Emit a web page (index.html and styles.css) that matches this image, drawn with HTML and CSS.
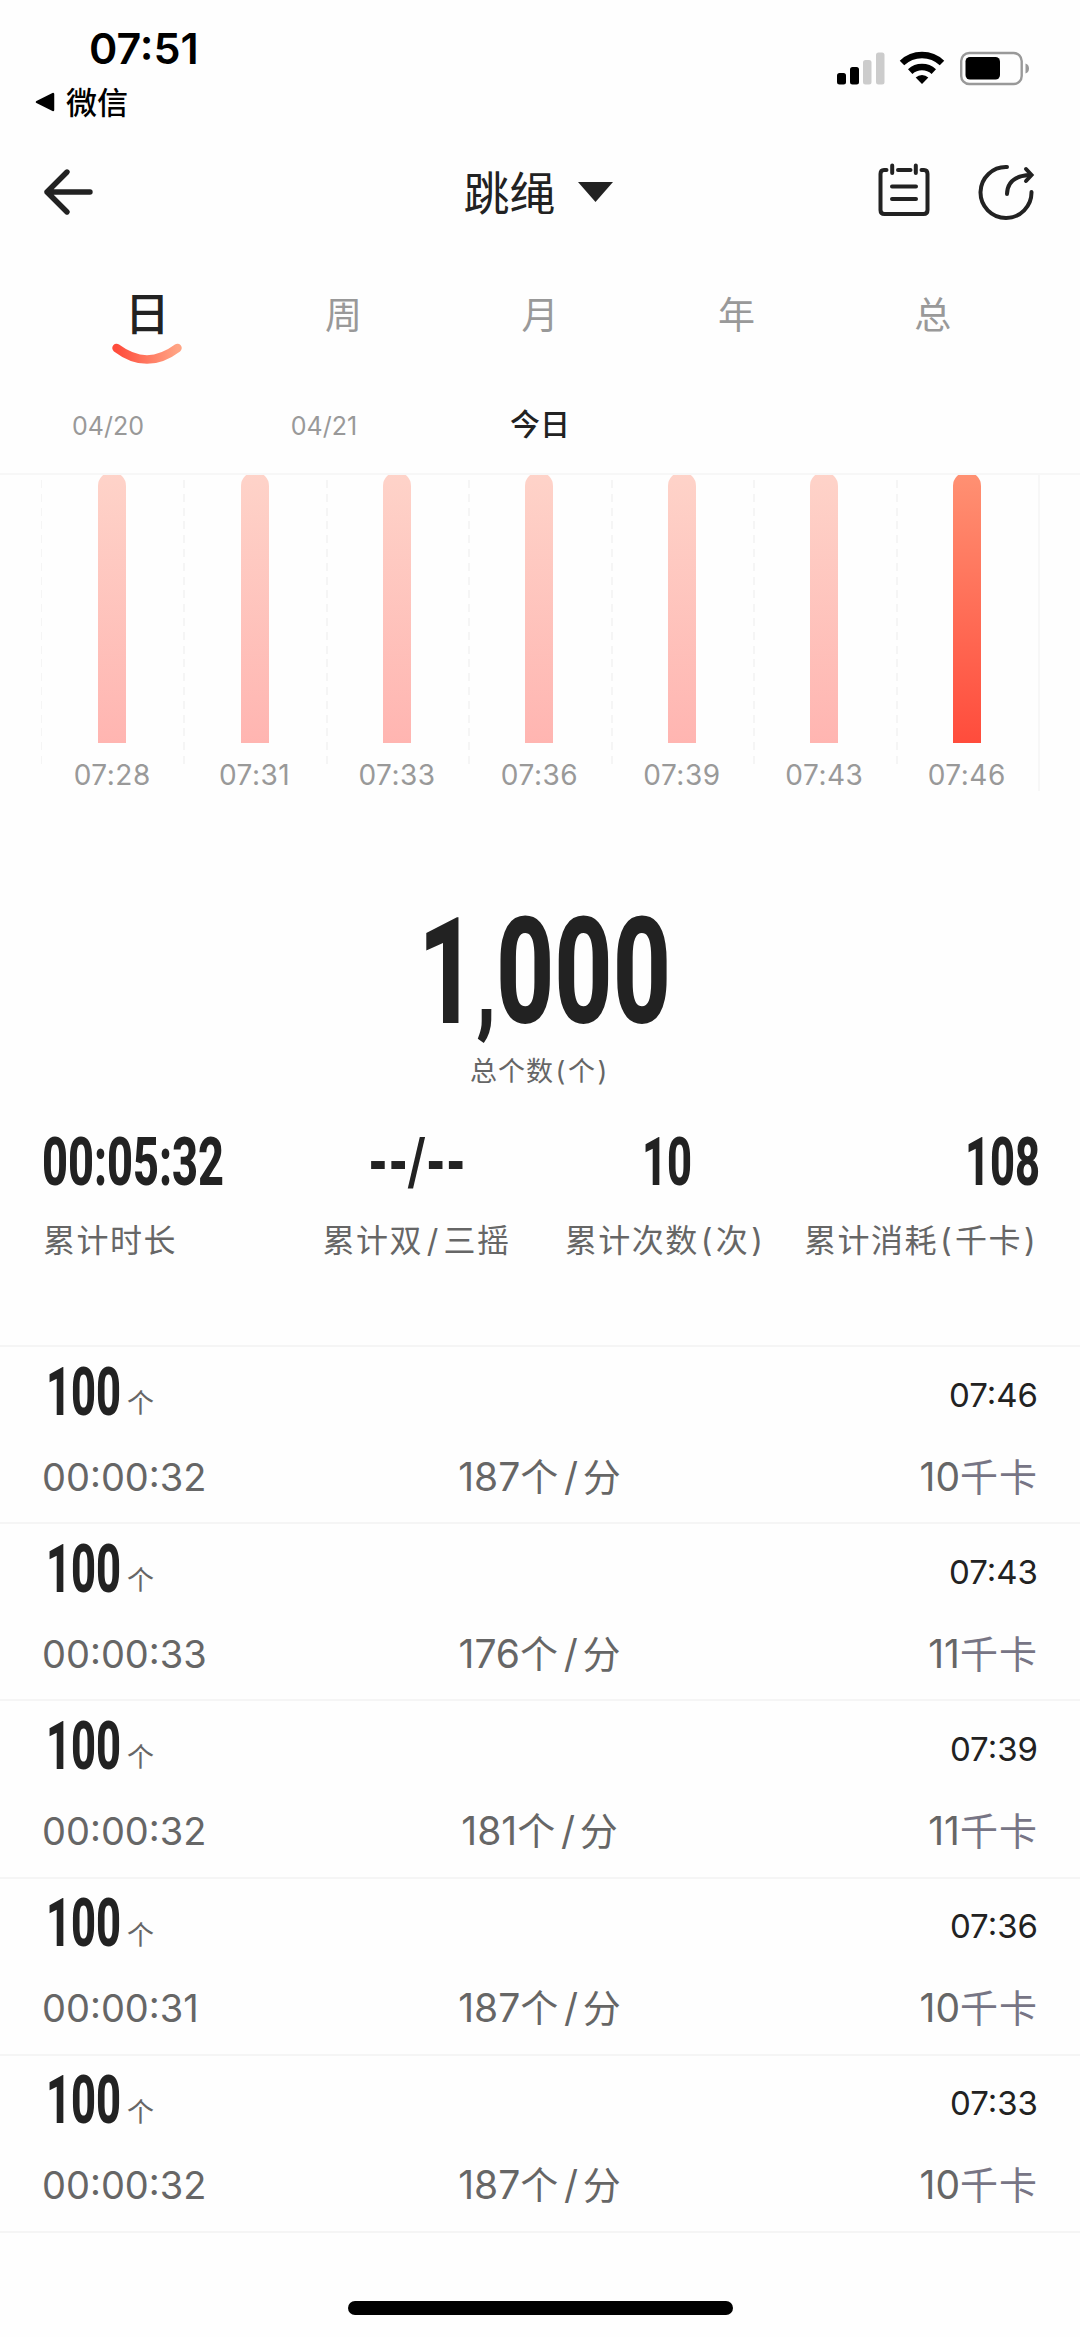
FILE: index.html
```html
<!DOCTYPE html>
<html lang="zh-CN">
  <head>
    <meta charset="UTF-8" />
    <meta name="viewport" content="width=device-width, initial-scale=1.0" />
    <title>跳绳</title>
    <link rel="stylesheet" href="styles.css">
  </head>

  <body>
    <div class="status">
      <div class="status-left">
        <p class="clock">07:51</p>
        <p class="back-app">
          <svg width="20" height="20" viewBox="0 0 20 20"><path d="M2 10 L18 2 V18 Z" fill="#000" stroke="#000" stroke-width="2.5" stroke-linejoin="round" /></svg>
          <span>微信</span>
        </p>
      </div>
      <svg class="status-icons" width="194" height="36" viewBox="836 51 194 36">
        <rect x="837" y="73" width="9" height="11.5" rx="2.5" />
        <rect x="850" y="67" width="9" height="17.5" rx="2.5" />
        <rect x="863" y="60" width="8.5" height="24.5" rx="2.5" fill="#ccc" />
        <rect x="876" y="52.5" width="8.5" height="32" rx="2.5" fill="#ccc" />
        <g fill="none" stroke="#000" stroke-width="6.5">
          <path d="M902 63 A29 29 0 0 1 942 63" />
          <path d="M910.2 71.6 A17.5 17.5 0 0 1 933.8 71.6" />
        </g>
        <path d="M915.7 77.5 A9 9 0 0 1 928.3 77.5 L922 84 Z" />
        <rect x="961.2" y="53" width="60.5" height="31" rx="8" fill="none" stroke="#999" stroke-width="2.4" />
        <rect x="965.5" y="57" width="34.5" height="22.5" rx="4.5" />
        <path d="M1025.5 63.5 Q1029 64.5 1029 68.5 Q1029 72.5 1025.5 73.5 Z" fill="#999" />
      </svg>
    </div>

    <header class="topbar">
      <svg width="52" height="50" viewBox="0 0 52 50" fill="none" stroke="#222" stroke-width="5.4" stroke-linecap="round" stroke-linejoin="round">
        <path d="M25 5 L5 25 L25 45 M5 25 H48" />
      </svg>
      <h1 class="title"><span>跳绳</span>
        <svg width="35" height="20" viewBox="0 0 35 20"><path d="M0 0 H35 L17.5 20 Z" fill="#222" /></svg>
      </h1>
      <div class="tools">
        <svg width="52" height="54" viewBox="0 0 52 54" fill="none" stroke="#222" stroke-width="4" stroke-linecap="round">
          <path d="M8.5 7 H6 Q2.5 7 2.5 11 V47 Q2.5 51 6.5 51 H45.5 Q49.5 51 49.5 47 V11 Q49.5 7 46 7 H43.5" />
          <path d="M20 7 H32.5 M14.2 2.5 V10 M37.8 2.5 V10 M14 23.5 H38 M14 36 H38" />
        </svg>
        <svg width="56" height="58" viewBox="0 0 56 58" fill="none" stroke="#222" stroke-width="4" stroke-linecap="round">
          <path d="M29 4 A25.5 25.5 0 1 0 53.5 29" />
          <path d="M29 31 Q29.5 13 52 12" />
          <path d="M48 6 L53.5 12 L48 18" />
        </svg>
      </div>
    </header>

    <nav class="tabs">
      <button class="tab valgt">日
        <svg class="smile" width="70" height="22" viewBox="0 0 70 22">
          <defs>
            <linearGradient id="smile" x1="0" x2="1"><stop offset="0" stop-color="#ff4c3c" /><stop offset="1" stop-color="#ffa484" /></linearGradient>
          </defs>
          <path d="M4.5 5 Q35 28 65.5 5" fill="none" stroke="url(#smile)" stroke-width="8.5" stroke-linecap="round" />
        </svg>
      </button>
      <button class="tab">周</button>
      <button class="tab">月</button>
      <button class="tab">年</button>
      <button class="tab">总</button>
    </nav>

    <div class="dates">
      <span>04/20</span>
      <span>04/21</span>
      <span class="today">今日</span>
    </div>

    <section class="chart">
      <div class="col"><div class="bar"></div><span>07:28</span></div>
      <div class="col"><div class="bar"></div><span>07:31</span></div>
      <div class="col"><div class="bar"></div><span>07:33</span></div>
      <div class="col"><div class="bar"></div><span>07:36</span></div>
      <div class="col"><div class="bar"></div><span>07:39</span></div>
      <div class="col"><div class="bar"></div><span>07:43</span></div>
      <div class="col"><div class="bar active"></div><span>07:46</span></div>
    </section>

    <section class="total">
      <svg class="big" width="264" height="130"><text x="10" y="110" textLength="253" lengthAdjust="spacingAndGlyphs">1<tspan class="comma">,</tspan>000</text></svg>
      <p>总个数<i>(</i>个<i>)</i></p>
    </section>

    <section class="stats">
      <div>
        <svg class="num" width="182" height="52"><text x="-1" y="49" textLength="182" lengthAdjust="spacingAndGlyphs">00:05:32</text></svg>
        <p>累计时长</p>
      </div>
      <div>
        <svg class="num" width="98" height="52"><text x="0" y="49" textLength="98" lengthAdjust="spacingAndGlyphs">--/--</text></svg>
        <p>累计双<i class="slash">/</i>三摇</p>
      </div>
      <div>
        <svg class="num" width="50" height="52"><text x="1" y="49" textLength="50" lengthAdjust="spacingAndGlyphs">10</text></svg>
        <p>累计次数<i>(</i>次<i>)</i></p>
      </div>
      <div>
        <svg class="num" width="75" height="52"><text x="1" y="49" textLength="75" lengthAdjust="spacingAndGlyphs">108</text></svg>
        <p>累计消耗<i>(</i>千卡<i>)</i></p>
      </div>
    </section>

    <main class="records">
      <article>
        <h2><svg class="num" width="76" height="52"><text x="0" y="49" textLength="75" lengthAdjust="spacingAndGlyphs">100</text></svg><span>个</span></h2>
        <time>07:46</time>
        <p class="duration">00:00:32</p>
        <p class="speed">187<b>个</b><i class="slash">/</i><b>分</b></p>
        <p class="kcal">10<b>千卡</b></p>
      </article>
      <article>
        <h2><svg class="num" width="76" height="52"><text x="0" y="49" textLength="75" lengthAdjust="spacingAndGlyphs">100</text></svg><span>个</span></h2>
        <time>07:43</time>
        <p class="duration">00:00:33</p>
        <p class="speed">176<b>个</b><i class="slash">/</i><b>分</b></p>
        <p class="kcal">11<b>千卡</b></p>
      </article>
      <article>
        <h2><svg class="num" width="76" height="52"><text x="0" y="49" textLength="75" lengthAdjust="spacingAndGlyphs">100</text></svg><span>个</span></h2>
        <time>07:39</time>
        <p class="duration">00:00:32</p>
        <p class="speed">181<b>个</b><i class="slash">/</i><b>分</b></p>
        <p class="kcal">11<b>千卡</b></p>
      </article>
      <article>
        <h2><svg class="num" width="76" height="52"><text x="0" y="49" textLength="75" lengthAdjust="spacingAndGlyphs">100</text></svg><span>个</span></h2>
        <time>07:36</time>
        <p class="duration">00:00:31</p>
        <p class="speed">187<b>个</b><i class="slash">/</i><b>分</b></p>
        <p class="kcal">10<b>千卡</b></p>
      </article>
      <article>
        <h2><svg class="num" width="76" height="52"><text x="0" y="49" textLength="75" lengthAdjust="spacingAndGlyphs">100</text></svg><span>个</span></h2>
        <time>07:33</time>
        <p class="duration">00:00:32</p>
        <p class="speed">187<b>个</b><i class="slash">/</i><b>分</b></p>
        <p class="kcal">10<b>千卡</b></p>
      </article>
    </main>

    <div class="home-bar"></div>
  </body>
</html>
```

FILE: styles.css
```css
* {
  box-sizing: border-box;
  margin: 0;
  padding: 0;
}

body {
  width: 1080px;
  height: 2337px;
  overflow: hidden;
  background-color: #fefefe;
  color: #222;
  font-family: Inter, "Noto Sans CJK SC", sans-serif;
}

svg {
  display: block;
  flex: none;
  overflow: visible;
}

i,
b {
  font-style: normal;
  font-weight: inherit;
}

i {
  margin: 0 0.06em;
}

.slash {
  margin: 0 0.12em;
}

.status {
  display: flex;
  justify-content: space-between;
  height: 130px;
  padding: 25px 50px 0 35px;
  color: #000;
}

.status-icons {
  margin-top: 26px;
}

.clock {
  padding-left: 54px;
  font-size: 43px;
  line-height: 46px;
  font-weight: 600;
}

.back-app {
  display: flex;
  align-items: center;
  gap: 11px;
  height: 40px;
  margin-top: 11px;
  font-size: 31px;
  font-weight: 500;
}

.back-app span {
  margin-top: -3px;
}

.topbar {
  display: grid;
  grid-template-columns: 1fr auto 1fr;
  align-items: center;
  height: 123px;
  padding: 0 46px 0 42px;
}

.title {
  display: flex;
  align-items: center;
  gap: 22px;
  font-size: 46px;
  font-weight: 400;
}

.title span {
  margin-top: -4px;
}

.tools {
  display: flex;
  justify-content: flex-end;
  gap: 48px;
}

.tabs {
  display: grid;
  grid-template-columns: repeat(5, 1fr);
  height: 120px;
  padding: 0 49px;
}

.tab {
  display: flex;
  flex-direction: column;
  align-items: center;
  padding-top: 35px;
  border: none;
  background: none;
  color: #999;
  font-family: inherit;
  font-size: 37px;
  line-height: 56px;
}

.tab.valgt {
  padding-top: 34px;
  color: #222;
  font-size: 45px;
  font-weight: 500;
}

.dates {
  display: grid;
  grid-template-columns: repeat(5, 1fr);
  height: 102px;
  padding-top: 2px;
  border-bottom: 2px solid #f7f7f7;
  text-align: center;
  color: #999;
  font-size: 25px;
  line-height: 102px;
}

.today {
  color: #222;
  font-size: 30px;
  line-height: 98px;
  font-weight: 500;
}

.chart {
  display: grid;
  grid-template-columns: repeat(7, 1fr);
  width: 999px;
  height: 316px;
  margin-left: 41px;
  border-right: 2px solid #f7f7f7;
  overflow: hidden;
}

.col {
  display: flex;
  flex-direction: column;
  align-items: center;
  background: repeating-linear-gradient(#f5f5f5 0 8px, transparent 8px 13.8px) 0 5px / 2px 285px no-repeat;
  color: #999;
  font-size: 28px;
  line-height: 34px;
  letter-spacing: 0.5px;
}

.col:first-child {
  background-size: 1px 285px;
}

.bar {
  width: 28px;
  height: 271px;
  margin-top: -3px;
  margin-bottom: 15px;
  border-radius: 14px 14px 0 0;
  background: linear-gradient(#fed3c9, #ffb5b1);
}

.bar.active {
  background: linear-gradient(#ff9173, #ff4c3c);
}

.total {
  display: flex;
  flex-direction: column;
  align-items: center;
  height: 345px;
  padding-top: 122px;
  color: #666;
  font-size: 27px;
  letter-spacing: 1px;
}

.total p {
  margin-top: 7px;
}

/* condensed figures */
.num text,
.big text {
  fill: #222;
  font-family: Roboto, sans-serif;
  font-weight: 800;
  font-size: 66px;
  letter-spacing: 0;
}

.big text {
  font-size: 148px;
}

.big .comma {
  font-size: 112px;
}

.stats {
  display: grid;
  grid-template-columns: repeat(4, 1fr);
  height: 209px;
  padding: 0 41px 0 43px;
  color: #666;
  font-size: 32px;
  letter-spacing: 1.5px;
  white-space: nowrap;
}

.stats div {
  display: flex;
  flex-direction: column;
  align-items: center;
  gap: 27px;
}

.stats div:first-child {
  align-items: flex-start;
}

.stats div:last-child {
  align-items: flex-end;
}

.records {
  border-top: 2px solid #f5f5f5;
}

article {
  display: grid;
  grid-template-columns: 1fr 1fr 1fr;
  grid-template-rows: 90px 79px;
  align-items: center;
  height: 177.2px;
  padding: 0 42px 0 42px;
  border-bottom: 2px solid #f5f5f5;
  color: #666;
  font-size: 39px;
  line-height: 60px;
}

h2 {
  display: flex;
  align-items: center;
  gap: 5px;
  padding-left: 4px;
  font-size: 27px;
  line-height: 32px;
  font-weight: 400;
}

h2 svg {
  margin-top: -1px;
}

h2 span {
  margin-top: 24px;
}

time {
  grid-column: 3;
  padding-top: 5px;
  text-align: right;
  color: #222;
  font-size: 33px;
}

.duration {
  font-size: 38px;
}

.speed {
  text-align: center;
}

.kcal {
  text-align: right;
}

article b {
  font-size: 38px;
  letter-spacing: 1px;
}

.kcal b {
  color: #777585;
}

.home-bar {
  width: 385px;
  height: 14px;
  margin: 68px auto 0 348px;
  border-radius: 7px;
  background-color: #000;
}
```
